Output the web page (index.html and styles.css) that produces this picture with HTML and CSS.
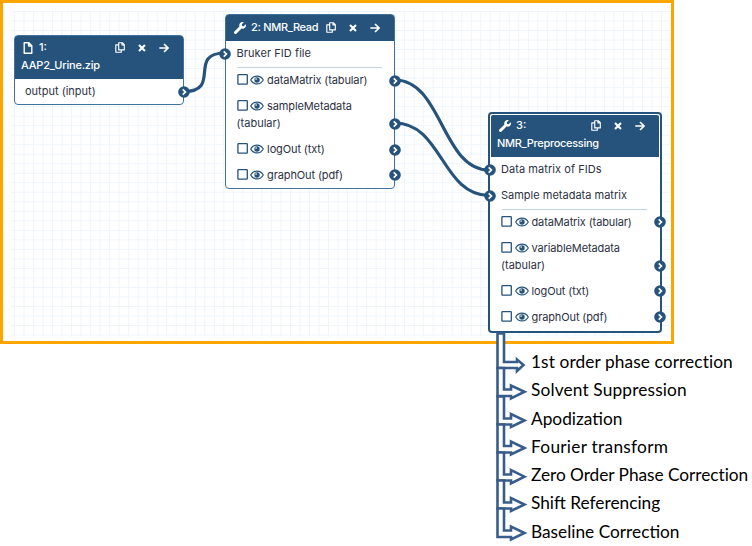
FILE: index.html
```html
<!DOCTYPE html>
<html lang="en">
<head>
<meta charset="utf-8">
<title>NMR workflow</title>
<link rel="stylesheet" href="styles.css">
</head>
<body>
<svg class="defs" width="0" height="0" aria-hidden="true">
  <symbol id="file" viewBox="0 0 10 12"><path d="M1.2.8h4.6l3 3v7.4H1.2zM5.6.8v3.2h3.2" fill="none" stroke="currentColor" stroke-width="1.4" stroke-linejoin="round"/></symbol>
  <symbol id="wrench" viewBox="0 0 512 512"><path fill="currentColor" d="M508 109c-2-9-14-12-20-5l-75 74-68-11-11-68 74-75c7-7 4-18-5-20-48-12-100 1-137 38-40 40-51 98-35 149L19 402a64 64 0 0 0 91 91l211-211c51 16 109 5 149-35 38-38 50-90 38-138z"/></symbol>
  <symbol id="copy" viewBox="0 0 10 11"><path d="M3.7.7h3.6l2 2v5.2H3.7zM7 .8v2.1h2.2M3.5 2.9H.8v7.3h5.5V8.3" fill="none" stroke="currentColor" stroke-width="1.15" stroke-linejoin="round"/></symbol>
  <symbol id="close" viewBox="0 0 8 8"><path d="M1 1l6 6M7 1L1 7" stroke="currentColor" stroke-width="2.1"/></symbol>
  <symbol id="arrow" viewBox="0 0 10 10"><path d="M.3 5h8.4M5 1l4 4-4 4" fill="none" stroke="currentColor" stroke-width="1.7"/></symbol>
  <symbol id="box" viewBox="0 0 11 11"><rect x=".9" y=".7" width="9.4" height="9.4" rx=".6" fill="#fff" stroke="#25537b" stroke-width="1.3"/></symbol>
  <symbol id="eye" viewBox="0 0 14 10"><path d="M.7 5C3.5-.2 10.5-.2 13.3 5 10.5 10.2 3.5 10.2.7 5z" fill="none" stroke="currentColor" stroke-width="1.1"/><circle cx="7" cy="5" r="2.7" fill="currentColor"/><circle cx="6.1" cy="4.1" r=".8" fill="#fff"/></symbol>
  <symbol id="port" viewBox="0 0 12 12"><circle cx="6" cy="6" r="5.8" fill="#25537b"/><path d="M4.7 3.3L7.4 6 4.7 8.7" fill="none" stroke="#fff" stroke-width="1.7"/></symbol>
</svg>

<main class="canvas">
  <div class="grid"></div>
  <svg class="wires" width="752" height="546" viewBox="0 0 752 546">
    <path d="M184 91.5C222 91.5 187 53 225 53"/>
    <path d="M395 80C442 80 442 170 489 170"/>
    <path d="M395 123C442 123 442 195.5 489 195.5"/>
  </svg>

  <section class="node input">
    <header>
      <div class="bar"><svg class="i-file"><use href="#file"/></svg><span class="num">1:</span>
        <div class="tools"><svg class="i-copy"><use href="#copy"/></svg><svg class="i-close"><use href="#close"/></svg><svg class="i-arrow"><use href="#arrow"/></svg></div></div>
      <div class="name zip">AAP2_Urine.zip</div>
    </header>
    <div class="row"><span>output (input)</span><svg class="port out"><use href="#port"/></svg></div>
  </section>

  <section class="node read">
    <header>
      <div class="bar"><svg class="i-wrench"><use href="#wrench"/></svg><span class="num">2: NMR_Read</span>
        <div class="tools"><svg class="i-copy"><use href="#copy"/></svg><svg class="i-close"><use href="#close"/></svg><svg class="i-arrow"><use href="#arrow"/></svg></div></div>
    </header>
    <div class="row"><svg class="port in"><use href="#port"/></svg><span class="wide">Bruker FID file</span></div>
    <hr>
    <div class="row"><svg class="box"><use href="#box"/></svg><svg class="i-eye"><use href="#eye"/></svg><span class="tight">dataMatrix (tabular)</span><svg class="port out"><use href="#port"/></svg></div>
    <div class="row"><svg class="box"><use href="#box"/></svg><svg class="i-eye"><use href="#eye"/></svg><span class="tight">sampleMetadata</span><br><span>(tabular)</span><svg class="port out"><use href="#port"/></svg></div>
    <div class="row"><svg class="box"><use href="#box"/></svg><svg class="i-eye"><use href="#eye"/></svg><span class="tight">logOut (txt)</span><svg class="port out"><use href="#port"/></svg></div>
    <div class="row"><svg class="box"><use href="#box"/></svg><svg class="i-eye"><use href="#eye"/></svg><span class="tight">graphOut (pdf)</span><svg class="port out"><use href="#port"/></svg></div>
  </section>

  <section class="node prep">
    <header>
      <div class="bar"><svg class="i-wrench"><use href="#wrench"/></svg><span class="num">3:</span>
        <div class="tools"><svg class="i-copy"><use href="#copy"/></svg><svg class="i-close"><use href="#close"/></svg><svg class="i-arrow"><use href="#arrow"/></svg></div></div>
      <div class="name long">NMR_Preprocessing</div>
    </header>
    <div class="row"><svg class="port in"><use href="#port"/></svg><span class="wide">Data matrix of FIDs</span></div>
    <div class="row"><svg class="port in"><use href="#port"/></svg><span>Sample metadata matrix</span></div>
    <hr>
    <div class="row"><svg class="box"><use href="#box"/></svg><svg class="i-eye"><use href="#eye"/></svg><span class="tight">dataMatrix (tabular)</span><svg class="port out"><use href="#port"/></svg></div>
    <div class="row"><svg class="box"><use href="#box"/></svg><svg class="i-eye"><use href="#eye"/></svg><span class="tight">variableMetadata</span><br><span>(tabular)</span><svg class="port out"><use href="#port"/></svg></div>
    <div class="row"><svg class="box"><use href="#box"/></svg><svg class="i-eye"><use href="#eye"/></svg><span class="tight">logOut (txt)</span><svg class="port out"><use href="#port"/></svg></div>
    <div class="row"><svg class="box"><use href="#box"/></svg><svg class="i-eye"><use href="#eye"/></svg><span class="tight">graphOut (pdf)</span><svg class="port out"><use href="#port"/></svg></div>
  </section>
</main>

<div class="steps">
  <svg class="branches" width="40" height="214" viewBox="492 332 40 214">
    <path d="M497.500 333.500H504V362H517V359.500L523.500 365 517 371V368H497.500Z"/>
    <path d="M497.500 368H504V389.500H511V385.500L524.500 391.700 511 398.500V396H497.500Z"/>
    <path d="M497.500 396.500H504V418.500H511V414L524.500 420.500 511 427V424.500H497.500Z"/>
    <path d="M497.500 424.500H504V446H511V441.500L524.500 448 511 454.500V452.500H497.500Z"/>
    <path d="M497.500 452.500H504V474.500H511V470L524.500 476.700 511 483.500V480.500H497.500Z"/>
    <path d="M497.500 480.500H504V502.500H511V498L524.500 504.500 511 511V508.500H497.500Z"/>
    <path d="M497.500 508.500H504V530.500H511V526.500L524.500 533 511 539.500V537H497.500Z"/>
  </svg>
  <ul>
    <li class="s1">1st order phase correction</li>
    <li class="s2">Solvent Suppression</li>
    <li>Apodization</li>
    <li class="s4">Fourier transform</li>
    <li class="s5">Zero Order Phase Correction</li>
    <li>Shift Referencing</li>
    <li>Baseline Correction</li>
  </ul>
</div>
</body>
</html>
```
FILE: styles.css
```css
* { box-sizing: border-box; }
body { margin: 0; width: 752px; height: 546px; overflow: hidden; background: #fff; position: relative; font-family: Inter, "Liberation Sans", sans-serif; }
.defs { position: absolute; }
.canvas { width: 674px; height: 344px; border: 3px solid #ffa500; padding: 8px; }
.grid {
  width: 660px; height: 326px;
  background-image: linear-gradient(90deg, #eff5fb 1px, transparent 1px), linear-gradient(#eff5fb 1px, transparent 1px);
  background-size: 9.53px 9.53px; background-position: 3px 0, 0 0;
}
.wires { position: absolute; left: 0; top: 0; }
.wires path { fill: none; stroke: #25537b; stroke-width: 3.2; }
.node { position: absolute; width: 170px; border: 1px solid #41729b; border-radius: 4px; background: #fff; color: #2c3143; font-size: 11px; line-height: 17.4px; }
.input { left: 14px; top: 35px; height: 70px; }
.read { left: 225px; top: 14px; height: 175px; }
.prep { left: 488px; top: 112px; width: 174px; height: 221px; border: 2px solid #25537b; padding: 1px; }
header { background: #25537b; color: #fff; font-weight: 500; padding: 3px 14px 4px 6px; border-radius: 2px 2px 0 0; }
.input header { height: 43px; }
.read header { height: 26px; padding-top: 4px; }
.prep header { height: 42px; padding: 2px 14px 0 6px; }
.bar { display: flex; align-items: center; height: 17.5px; padding-left: 2px; }
.zip { letter-spacing: -.2px; }
.long { letter-spacing: -.3px; }
.read .num { letter-spacing: -.3px; }
.tools { display: flex; align-items: center; margin-left: auto; }
.i-file { width: 10px; height: 12px; margin-right: 6px; }
.i-wrench { width: 12px; height: 12px; margin-right: 5px; }
.i-copy { width: 10px; height: 11px; margin-right: 13px; }
.i-close { width: 8px; height: 8px; margin-right: 13px; }
.i-arrow { width: 10px; height: 10px; }
.row { position: relative; padding: 4.2px 10.6px; white-space: nowrap; }
.row .wide { letter-spacing: .06px; }
.row .tight { letter-spacing: -.12px; }
.input .row { padding-left: 10px; }
.prep .row { padding-left: 10px; }
hr { height: 0; margin: 0 12px 0 11px; border: 0; border-top: 1px solid #c6d5e2; }
.box { display: inline-block; width: 11px; height: 11px; margin-right: 2.5px; vertical-align: -1px; }
.i-eye { width: 14px; height: 10px; margin-right: 3px; color: #25537b; vertical-align: -1px; }
.port { position: absolute; width: 12px; height: 12px; bottom: 7px; }
.port.in { left: -7px; }
.port.out { right: -7px; }
.prep .port.out { right: -7px; }
.steps { position: absolute; left: 492px; top: 332px; display: flex; }
.branches { flex: none; width: 40px; }
.branches path { fill: #fff; stroke: #385d8a; stroke-width: 2.6; }
ul { list-style: none; margin: 16px 0 0 -1px; padding: 0; color: #000; font: 17.3px/28.3px Lato, sans-serif; white-space: nowrap; }
.s1 { letter-spacing: .1px; }
.s2 { letter-spacing: .15px; }
.s4 { letter-spacing: .28px; }
.s5 { letter-spacing: -.04px; }
```
